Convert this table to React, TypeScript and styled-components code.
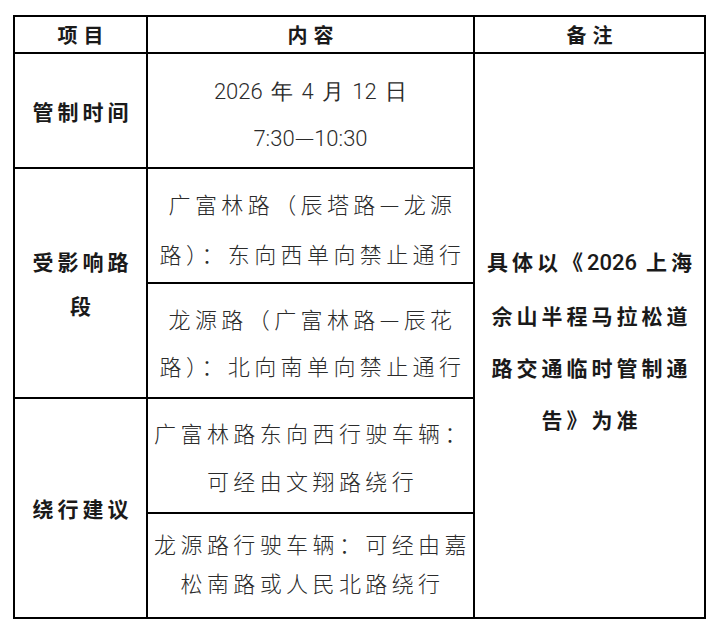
import React from "react";
import styled, { createGlobalStyle } from "styled-components";

const Global = createGlobalStyle`
  html, body {
    margin: 0;
    padding: 0;
    background: #ffffff;
  }
  body {
    font-family: "Noto Sans CJK SC", "Noto Sans", sans-serif;
  }
`;

const Page = styled.div`
  padding: 15px 0 0 13px;
`;

const Table = styled.div`
  display: grid;
  grid-template-columns: 131px 325px 229px;
  grid-template-rows: 35px 113px 113px 113px 113px 103px;
  gap: 2px;
  padding: 2px;
  width: max-content;
  background: #000000;
`;

type Place = { $col: number; $row: string };

const Cell = styled.div<Place>`
  grid-column: ${(p) => p.$col};
  grid-row: ${(p) => p.$row};
  background: #ffffff;
  display: flex;
  flex-direction: column;
  align-items: center;
  justify-content: center;
  text-align: center;
`;

const HeaderCell = styled(Cell)`
  font-family: "Noto Sans CJK SC", sans-serif;
  font-weight: 700;
  font-size: 20px;
  letter-spacing: 6px;
  color: #1a1a1a;
  padding-left: 6px;
`;

const LabelCell = styled(Cell)`
  font-family: "Noto Sans CJK SC", sans-serif;
  font-weight: 700;
  font-size: 21px;
  letter-spacing: 4px;
  line-height: 44px;
  color: #1a1a1a;
  padding-left: 4px;
`;

const ContentCell = styled(Cell)<{ $lh: number; $shift?: number; $indent?: number }>`
  font-family: "Noto Sans CJK SC", sans-serif;
  font-weight: 300;
  font-size: 22px;
  letter-spacing: 4.4px;
  line-height: ${(p) => p.$lh}px;
  color: #2b2b2b;
  padding-top: ${(p) => Math.max(p.$shift ?? 0, 0)}px;
  padding-bottom: ${(p) => Math.max(-(p.$shift ?? 0), 0)}px;
  padding-left: ${(p) => p.$indent ?? 4}px;
`;

const NoteCell = styled(Cell)`
  font-family: "Noto Sans CJK SC", sans-serif;
  font-weight: 700;
  font-size: 21px;
  letter-spacing: 4px;
  line-height: 52px;
  color: #1a1a1a;
  padding-top: 8px;
  padding-left: 4px;
`;

const Line = styled.span`
  display: block;
  white-space: nowrap;
`;

const Latin = styled.span<{ $bold?: boolean }>`
  font-family: "Roboto", "Liberation Sans", sans-serif;
  font-weight: ${(p) => (p.$bold ? 500 : 300)};
  font-size: 22px;
  letter-spacing: 0;
  word-spacing: 3px;
`;

const Dash = styled.span`
  font-family: "Noto Sans CJK SC", sans-serif;
  letter-spacing: 0;
`;

export default function App() {
  return (
    <Page>
      <Global />
      <Table>
        <HeaderCell $col={1} $row="1">项目</HeaderCell>
        <HeaderCell $col={2} $row="1">内容</HeaderCell>
        <HeaderCell $col={3} $row="1">备注</HeaderCell>

        <LabelCell $col={1} $row="2">
          <Line>管制时间</Line>
        </LabelCell>
        <ContentCell $col={2} $row="2" $lh={45} $shift={7} $indent={0}>
          <Line>
            <Latin>2026 年 4 月 12 日</Latin>
          </Line>
          <Line>
            <Latin>
              7:30<Dash>—</Dash>10:30
            </Latin>
          </Line>
        </ContentCell>

        <LabelCell $col={1} $row="3 / span 2">
          <Line>受影响路</Line>
          <Line>段</Line>
        </LabelCell>
        <ContentCell $col={2} $row="3" $lh={50} $shift={4}>
          <Line>广富林路（辰塔路—龙源</Line>
          <Line>路）：东向西单向禁止通行</Line>
        </ContentCell>
        <ContentCell $col={2} $row="4" $lh={47} $shift={2}>
          <Line>龙源路（广富林路—辰花</Line>
          <Line>路）：北向南单向禁止通行</Line>
        </ContentCell>

        <LabelCell $col={1} $row="5 / span 2">
          <Line>绕行建议</Line>
        </LabelCell>
        <ContentCell $col={2} $row="5" $lh={48}>
          <Line>广富林路东向西行驶车辆：</Line>
          <Line>可经由文翔路绕行</Line>
        </ContentCell>
        <ContentCell $col={2} $row="6" $lh={39} $shift={-6}>
          <Line>龙源路行驶车辆：可经由嘉</Line>
          <Line>松南路或人民北路绕行</Line>
        </ContentCell>

        <NoteCell $col={3} $row="2 / span 5">
          <Line>
            具体以《<Latin $bold>2026</Latin> 上海
          </Line>
          <Line>佘山半程马拉松道</Line>
          <Line>路交通临时管制通</Line>
          <Line>告》为准</Line>
        </NoteCell>
      </Table>
    </Page>
  );
}
